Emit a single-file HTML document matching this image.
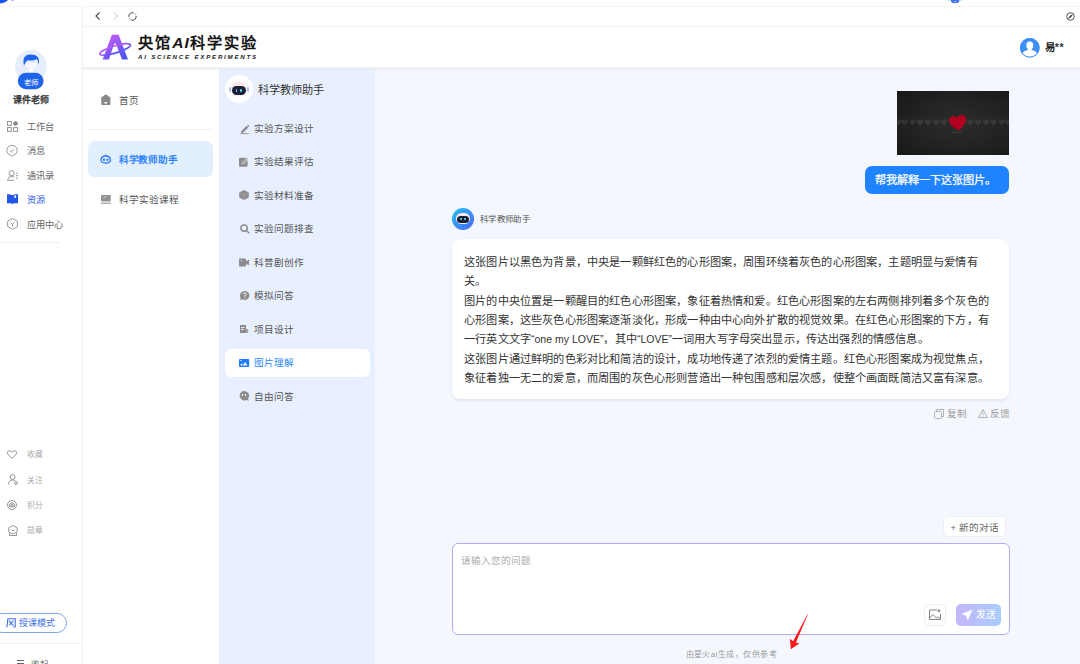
<!DOCTYPE html>
<html lang="zh-CN"><head><meta charset="utf-8">
<style>
*{box-sizing:border-box;margin:0;padding:0}
html,body{width:1080px;height:664px;overflow:hidden;background:#fff;font-family:"Liberation Sans",sans-serif;color:#333}
.a{position:absolute}
.t{position:absolute;white-space:nowrap}
svg{position:absolute;overflow:visible}
.nav{font-size:9.2px;line-height:14px;color:#666}
.bot{font-size:7.8px;line-height:12px;color:#aaa}
.m3{font-size:9.6px;line-height:14px;color:#555}
.en{letter-spacing:0;font-size:10.5px}
.m2{font-size:9.6px;line-height:14px;color:#555}
</style></head><body>
<!-- top strip -->
<div class="a" style="left:0;top:6px;width:1080px;height:1px;background:#f5f5f5"></div>
<svg style="left:0;top:0" width="16" height="5" viewBox="0 0 16 5"><path d="M0 0 H8 Q6 2.6 0 3.4Z" fill="#1a56e8"/><ellipse cx="12.5" cy="0" rx="1.2" ry="0.9" fill="#7a9cf2"/></svg>
<svg style="left:946px;top:0" width="18" height="5" viewBox="0 0 18 5"><ellipse cx="3.4" cy="0" rx="1.6" ry="1.2" fill="#b9dcfa"/><ellipse cx="15" cy="0" rx="1.6" ry="1.2" fill="#bfe6fa"/><path d="M5 0 H13.3 V1 Q13.3 3.1 11 3.1 H7.3 Q5 3.1 5 1Z" fill="#3d73ef"/><rect x="7.8" y="1" width="2.6" height="0.9" fill="#a9c2f6"/></svg>

<!-- ===== left sidebar ===== -->
<div class="a" style="left:82px;top:7px;width:1px;height:657px;background:#f0f0f0"></div>
<!-- avatar -->
<svg style="left:15px;top:49.6px" width="32" height="40" viewBox="0 0 32 40">
  <circle cx="16" cy="16" r="16" fill="#e6edfb"/>
  <path d="M9 12 Q9 20.2 16 20.4 Q23 20.2 23.2 12 Z" fill="#f4f7fe" stroke="#c9d6f3" stroke-width="0.5"/>
  <rect x="13.9" y="19" width="3.9" height="4.5" fill="#fff"/>
  <path d="M8.6 14.5 Q7 4.6 15.5 4.6 Q24.6 4.4 24 12.5 L23.4 14 Q23.2 10.4 21.8 9 Q18.5 11.2 13 10.3 Q10.5 11.2 9.6 14.8 Z" fill="#1e63e9"/>
  <rect x="2.8" y="22.7" width="25.8" height="16.6" rx="8.3" fill="#1e63e9"/>
</svg>
<div class="t" style="left:18px;top:78.3px;width:26px;text-align:center;font-size:7.4px;line-height:10px;color:#fff">老师</div>
<div class="t" style="left:6.2px;top:92.6px;width:50px;text-align:center;font-size:9px;line-height:14px;color:#2a2a2a;-webkit-text-stroke:0.35px #2a2a2a">课件老师</div>

<!-- nav items -->
<svg style="left:7px;top:121px" width="11" height="11" viewBox="0 0 11 11" fill="none" stroke="#8a8a8a" stroke-width="0.9">
  <rect x="0.5" y="0.5" width="3.8" height="3.8"/><rect x="0.5" y="6.6" width="3.8" height="3.8"/><rect x="6.6" y="6.6" width="3.8" height="3.8"/><circle cx="8.5" cy="2.5" r="1.9" fill="#8a8a8a"/>
</svg>
<div class="t nav" style="left:27.3px;top:120.3px">工作台</div>
<svg style="left:6.4px;top:144.5px" width="12" height="12" viewBox="0 0 12 12" fill="none" stroke="#8a8a8a" stroke-width="0.9">
  <path d="M4.6 10.2 A5.3 5 0 1 1 7.4 10.2 L6 11.4 Z"/><path d="M3.8 5.6 L5.4 7.1 L8.3 4.3"/>
</svg>
<div class="t nav" style="left:27.3px;top:144.3px">消息</div>
<svg style="left:7px;top:169.5px" width="12" height="11" viewBox="0 0 12 11" fill="none" stroke="#8a8a8a" stroke-width="0.9">
  <circle cx="4.6" cy="3.2" r="2.6"/><path d="M0.5 10.3 Q0.8 6.4 4.6 6.4 Q6.4 6.4 7.4 7.3 M0.5 10.3 H7"/><path d="M9.2 3.2 H11 M9.2 5.6 H11 M9.2 8 H11"/>
</svg>
<div class="t nav" style="left:27.3px;top:169px">通讯录</div>
<svg style="left:6.9px;top:193.5px" width="11" height="11" viewBox="0 0 11 11">
  <path d="M0 0.3 Q2.8 -0.2 5.5 1.2 Q8.2 -0.2 11 0.3 V9.3 H6.5 L5.5 10.6 L4.5 9.3 H0Z" fill="#2356e8"/><rect x="7.3" y="1.4" width="1.8" height="2.4" fill="#fff"/>
</svg>
<div class="t nav" style="left:27.3px;top:193.2px;color:#3c63e6">资源</div>
<svg style="left:6.9px;top:217.5px" width="11" height="12" viewBox="0 0 11 12" fill="none" stroke="#8a8a8a" stroke-width="0.9">
  <path d="M5.5 0.5 L10.3 3.2 V8.6 L5.5 11.3 L0.7 8.6 V3.2Z"/><path d="M3.6 4.6 L5.5 6.4 L7.4 4.6 M5.5 6.4 V8.4"/>
</svg>
<div class="t nav" style="left:27.3px;top:217.8px">应用中心</div>
<div class="a" style="left:0;top:242px;width:60px;height:1px;background:#f0f0f0"></div>

<!-- bottom items -->
<svg style="left:7.3px;top:449.6px" width="10" height="9" viewBox="0 0 10 9" fill="none" stroke="#8f8f8f" stroke-width="0.9"><path d="M5 8.4 L1.1 4.6 Q-0.3 2.8 1 1.2 Q2.8 -0.2 5 2 Q7.2 -0.2 9 1.2 Q10.3 2.8 8.9 4.6 Z"/></svg>
<div class="t bot" style="left:27px;top:448.8px">收藏</div>
<svg style="left:7.5px;top:474px" width="10" height="11" viewBox="0 0 10 11" fill="none" stroke="#888" stroke-width="0.9">
  <circle cx="4.5" cy="3" r="2.5"/><path d="M0.5 10.5 Q0.8 6.2 4.5 6 Q6.5 6 7.5 7"/><circle cx="8" cy="9" r="1.4"/>
</svg>
<div class="t bot" style="left:27px;top:474.6px">关注</div>
<svg style="left:7px;top:500px" width="10" height="10" viewBox="0 0 10 10" fill="none" stroke="#888" stroke-width="0.9">
  <circle cx="5" cy="5" r="4.5"/><path d="M2.5 6.8 V4.3 L5 2.6 L7.5 4.3 V6.8Z"/><circle cx="5" cy="5.2" r="1"/>
</svg>
<div class="t bot" style="left:27px;top:499.8px">积分</div>
<svg style="left:7.5px;top:525px" width="10" height="11" viewBox="0 0 10 11" fill="none" stroke="#888" stroke-width="0.9">
  <path d="M5 0.5 L9.2 2.8 V7 L5 9 L0.8 7 V2.8Z"/><path d="M1.5 8 V10.5 H8.5 V8"/><path d="M3.5 4.5 L5 6 L6.5 4.5"/>
</svg>
<div class="t bot" style="left:27px;top:525.2px">勋章</div>

<!-- 授课模式 -->
<div class="a" style="left:-8px;top:612.8px;width:74.6px;height:20.5px;border:1px solid #80a5f4;border-radius:11px"></div>
<svg style="left:6px;top:617.8px" width="10" height="10" viewBox="0 0 10 10" fill="none" stroke="#3d6fe8" stroke-width="1.1">
  <path d="M0.8 9.4 Q1.6 5 1.8 0.7 H9.2 V8.4 Q9.1 9.5 7.6 9.2"/><path d="M2.8 2.6 L7.6 8 M7.4 2.6 L3.4 7.2"/>
</svg>
<div class="t" style="left:19px;top:616.5px;font-size:9px;line-height:13px;color:#3d6fe8">授课模式</div>
<div class="a" style="left:0;top:643px;width:82px;height:1px;background:#f0f0f0"></div>
<div class="a" style="left:17px;top:660px;width:6.5px;height:1px;background:#666"></div>
<div class="a" style="left:17px;top:662.5px;width:6.5px;height:1px;background:#666"></div>
<div class="t" style="left:31px;top:657.5px;font-size:8.5px;line-height:12px;color:#666">收起</div>

<!-- ===== nav bar ===== -->
<div class="a" style="left:83px;top:26px;width:997px;height:1px;background:#f0f0f0"></div>
<svg style="left:95px;top:12px" width="6" height="8" viewBox="0 0 6 8" fill="none" stroke="#444" stroke-width="1.1"><path d="M4.5 0.5 L1 4 L4.5 7.5"/></svg>
<svg style="left:113px;top:12px" width="6" height="8" viewBox="0 0 6 8" fill="none" stroke="#ccc" stroke-width="1"><path d="M1 0.5 L4.5 4 L1 7.5"/></svg>
<svg style="left:127.5px;top:11.8px" width="9" height="9" viewBox="0 0 9 9" fill="none" stroke="#444" stroke-width="1"><path d="M5.6 0.9 A3.7 3.7 0 0 0 0.8 4.9"/><path d="M3.2 8.1 A3.7 3.7 0 0 0 8.1 4"/><path d="M1.2 6.3 A3.7 3.7 0 0 0 2 7.4 M7.1 1.6 A3.7 3.7 0 0 1 7.9 2.6"/></svg>
<svg style="left:1065.5px;top:12px" width="9" height="9" viewBox="0 0 9 9" fill="none" stroke="#444" stroke-width="0.9"><circle cx="4.5" cy="4.5" r="3.8"/><path d="M6.2 2.8 L3.6 4.6 L2.8 6.2 L5.4 4.4Z" fill="#444"/></svg>

<!-- ===== header ===== -->
<svg style="left:96px;top:30px" width="40" height="32" viewBox="0 0 40 32">
  <defs><linearGradient id="lg" x1="0.2" y1="0" x2="0.8" y2="1"><stop offset="0" stop-color="#c95af6"/><stop offset="1" stop-color="#4b56f6"/></linearGradient></defs>
  <path d="M15.9 4.8 L22.65 4.8 L32 29.6 L26 29.6 L19.9 13.6 L18.2 13.6 L13 29.6 L6.7 29.6 Z" fill="url(#lg)"/>
  <ellipse cx="19.15" cy="19.4" rx="16" ry="3.6" transform="rotate(-17 19.15 19.4)" fill="none" stroke="url(#lg)" stroke-width="1.7"/>
</svg>
<div class="t" style="left:138.3px;top:34px;font-size:15.2px;line-height:18px;font-weight:bold;color:#151515;letter-spacing:1.9px">央馆</div>
<div class="t" style="left:172.2px;top:34px;font-size:15.5px;line-height:18px;font-weight:bold;font-style:italic;color:#151515;letter-spacing:1.2px">AI</div>
<div class="t" style="left:190.3px;top:34px;font-size:15.2px;line-height:18px;font-weight:bold;color:#151515;letter-spacing:1.9px">科学实验</div>
<div class="t" style="left:138px;top:52.8px;font-size:6.2px;line-height:8px;font-weight:bold;font-style:italic;color:#222;letter-spacing:1.75px">AI SCIENCE EXPERIMENTS</div>
<div class="a" style="left:83px;top:67px;width:997px;height:2px;background:linear-gradient(#f3f3f3,#ececec)"></div><div class="a" style="left:83px;top:69px;width:997px;height:1px;background:rgba(0,0,30,0.03);z-index:5"></div>

<svg style="left:1019.5px;top:37.8px" width="19.6" height="19.6" viewBox="0 0 19.6 19.6">
  <circle cx="9.8" cy="9.8" r="9.8" fill="#3d8ff8"/>
  <path d="M9.8 3.6 Q13.2 3.6 13.3 7.2 Q13.3 10 11.6 11.2 V11.9 Q15.4 12.3 17.6 15.6 A9.8 9.8 0 0 1 2 15.6 Q4.2 12.3 8 11.9 V11.2 Q6.3 10 6.3 7.2 Q6.4 3.6 9.8 3.6Z" fill="#fff"/>
  <circle cx="9.8" cy="9.8" r="9.3" fill="none" stroke="#3d8ff8" stroke-width="1"/>
</svg>
<div class="t" style="left:1044.5px;top:41px;font-size:10.4px;line-height:13px;color:#222;font-weight:bold">易<span style="font-weight:bold;color:#333;font-size:10.5px;letter-spacing:0.6px;position:relative;top:-0.5px;left:0.3px">**</span></div>

<!-- ===== col 2 ===== -->
<svg style="left:101.3px;top:94.3px" width="9.6" height="11" viewBox="0 0 9.6 11"><path d="M4.8 0.2 L9.4 3.6 V10.2 Q9.4 10.9 8.7 10.9 H0.9 Q0.2 10.9 0.2 10.2 V3.6Z" fill="#8a8a8a"/><rect x="3.6" y="8" width="2.4" height="1.6" fill="#fff"/></svg>
<div class="t m2" style="left:118.5px;top:93.5px">首页</div>
<div class="a" style="left:88px;top:129px;width:125px;height:1px;background:#f1f1f1"></div>
<div class="a" style="left:88px;top:141px;width:125px;height:35.5px;border-radius:7px;background:#e2efff"></div>
<svg style="left:100.3px;top:154px" width="11.5" height="10" viewBox="0 0 11.5 10" fill="none" stroke="#2f7cf6" stroke-width="1.3"><path d="M1 6.2 Q1 2 5.75 2 Q10.5 2 10.5 6.2 Q10.5 9 5.75 9 Q1 9 1 6.2Z"/><path d="M5.75 2 V0.6"/><circle cx="4" cy="5.8" r="0.55" fill="#2f7cf6"/><circle cx="7.5" cy="5.8" r="0.55" fill="#2f7cf6"/></svg>
<div class="t m2" style="left:118.8px;top:152.8px;color:#2f86fb;font-weight:bold;letter-spacing:-0.2px">科学教师助手</div>
<svg style="left:101.2px;top:195.2px" width="9.8" height="9" viewBox="0 0 9.8 9"><rect x="0" y="0" width="9.8" height="6.4" rx="0.8" fill="#939393"/><rect x="2.4" y="1.6" width="3" height="1" fill="#d0d0d0"/><rect x="0" y="7.6" width="9.8" height="1.3" fill="#a5a5a5"/></svg>
<div class="t m2" style="left:118.5px;top:192.5px">科学实验课程</div>

<!-- ===== col 3 ===== -->
<div class="a" style="left:219px;top:69px;width:155.5px;height:595px;background:#e8f0ff"></div>
<div class="a" style="left:224.8px;top:75.3px;width:27.8px;height:27.8px;border-radius:50%;background:#fff"></div>
<div class="a" style="left:229px;top:87.2px;width:2.2px;height:4.4px;border-radius:1.1px;background:#a9c1f7"></div>
<div class="a" style="left:246.5px;top:87.2px;width:2.2px;height:4.4px;border-radius:1.1px;background:#a9c1f7"></div>
<div class="a" style="left:230.6px;top:82px;width:16.6px;height:14.2px;border-radius:7px;background:linear-gradient(160deg,#fbdde8,#f3f0f8 55%,#e4ecfb)"></div>
<div class="a" style="left:232px;top:85.8px;width:14px;height:9px;border-radius:4.5px;background:#1c1f35"></div>
<div class="a" style="left:235.6px;top:88.5px;width:1.7px;height:3.4px;border-radius:0.9px;background:#52e3e8"></div>
<div class="a" style="left:240.2px;top:88.5px;width:1.7px;height:3.4px;border-radius:0.9px;background:#52e3e8"></div>
<div class="t" style="left:257.5px;top:82px;font-size:11.2px;line-height:16px;color:#333">科学教师助手</div>

<svg style="left:239.5px;top:123.5px" width="10" height="10" viewBox="0 0 10 10"><path d="M1.2 7.2 L6.6 1.8 L8.3 3.5 L2.9 8.9 H1.2Z" fill="#8c8c8c"/><path d="M7.1 1.3 L7.9 0.5 L9.6 2.2 L8.8 3Z" fill="#8c8c8c"/><rect x="0.3" y="9.2" width="8.5" height="0.9" fill="#8c8c8c"/></svg>
<div class="t m3" style="left:253.8px;top:121.5px">实验方案设计</div>
<svg style="left:239.3px;top:157px" width="10" height="10" viewBox="0 0 10 10"><rect x="0" y="0.8" width="8.6" height="9" rx="1" fill="#8c8c8c"/><path d="M2.6 7.2 L3 5.4 L7.6 0.8 L9.2 2.4 L4.6 7Z" fill="#fff"/><path d="M3.4 5.6 L7.7 1.4 L8.6 2.3 L4.4 6.5 L3.2 6.9Z" fill="#8c8c8c"/></svg>
<div class="t m3" style="left:253.8px;top:155px">实验结果评估</div>
<svg style="left:239.2px;top:190.2px" width="10" height="10" viewBox="0 0 10 10"><path d="M5 0 L9.8 2.4 V7.6 L5 10 L0.2 7.6 V2.4Z" fill="#8c8c8c"/><path d="M0.4 2.5 L5 4.8 L9.6 2.5 M5 4.8 V9.8" stroke="#b5b5b5" stroke-width="0.6" fill="none"/></svg>
<div class="t m3" style="left:253.8px;top:188.5px">实验材料准备</div>
<svg style="left:239.6px;top:224px" width="10" height="10" viewBox="0 0 10 10" fill="none" stroke="#8c8c8c" stroke-width="1.5"><circle cx="4.1" cy="4.1" r="3.2"/><path d="M6.5 6.5 L9.2 9.2"/></svg>
<div class="t m3" style="left:253.8px;top:222px">实验问题排查</div>
<svg style="left:239.2px;top:258px" width="10" height="9" viewBox="0 0 10 9"><rect x="0" y="0.5" width="7" height="8" rx="1" fill="#8c8c8c"/><path d="M7 3.2 L10 1.5 V7.5 L7 5.8Z" fill="#8c8c8c"/><circle cx="2.2" cy="2.6" r="0.9" fill="#b5b5b5"/></svg>
<div class="t m3" style="left:253.8px;top:255.5px">科普剧创作</div>
<svg style="left:240px;top:290.8px" width="10" height="10" viewBox="0 0 10 10"><path d="M4.7 0 A4.7 4.5 0 1 1 2.2 8.3 L0.2 9.3 L0.6 6.8 A4.7 4.5 0 0 1 4.7 0Z" fill="#8c8c8c"/><path d="M3.3 3.4 Q3.4 1.9 4.8 1.9 Q6.2 2 6.1 3.3 Q6 4.1 5.1 4.6 L4.9 5.8" stroke="#fff" stroke-width="0.9" fill="none"/><circle cx="4.9" cy="7.2" r="0.55" fill="#fff"/></svg>
<div class="t m3" style="left:253.8px;top:289px">模拟问答</div>
<svg style="left:240px;top:325px" width="9" height="8" viewBox="0 0 9 8"><rect x="0" y="0" width="6" height="8" fill="#8c8c8c"/><rect x="6" y="4" width="2.2" height="4" fill="#a6a6a6"/><rect x="1.2" y="2.1" width="3.3" height="0.9" fill="#fff"/><rect x="1.2" y="4.1" width="2.5" height="0.9" fill="#fff"/></svg>
<div class="t m3" style="left:253.8px;top:322.5px">项目设计</div>

<div class="a" style="left:225px;top:348.5px;width:144.5px;height:28px;border-radius:6px;background:#fff"></div>
<svg style="left:239px;top:359px" width="10.2" height="8" viewBox="0 0 10.2 8"><rect x="0" y="0" width="10.2" height="8" rx="1" fill="#1e7bff"/><path d="M1.2 6.6 L2.7 4.3 L3.9 6.2 L6 3.1 L8.6 6.6Z" fill="#fff"/><rect x="1.2" y="1.2" width="1.7" height="0.8" fill="#fff" opacity="0.8"/></svg>
<div class="t m3" style="left:253.8px;top:356px;color:#2b88fc">图片理解</div>
<svg style="left:239.2px;top:391px" width="10" height="10" viewBox="0 0 10 10"><path d="M5 0 A4.9 4.7 0 1 0 7.4 9 L9.6 9.7 L9.2 7.6 A4.9 4.7 0 0 0 5 0Z" fill="#8c8c8c"/><ellipse cx="3.4" cy="4" rx="0.65" ry="1" fill="#fff"/><ellipse cx="6.4" cy="4" rx="0.65" ry="1" fill="#fff"/></svg>
<div class="t m3" style="left:253.8px;top:389.5px">自由问答</div>

<!-- ===== main ===== -->
<div class="a" style="left:375px;top:69px;width:705px;height:595px;background:#f4f8fe"></div>

<!-- image -->
<div class="a" style="left:897px;top:91px;width:112px;height:63.5px;background:radial-gradient(ellipse at 55% 50%,#2c2c2c 0%,#242424 45%,#181818 100%);overflow:hidden">
  <svg style="left:0;top:0" width="112" height="64" viewBox="0 0 112 64">
    <path d="M0.5 1 C0.2 0.75 0 0.55 0 0.3 C0 0.08 0.16 0 0.28 0 C0.4 0 0.47 0.08 0.5 0.2 C0.53 0.08 0.6 0 0.72 0 C0.84 0 1 0.08 1 0.3 C1 0.55 0.8 0.75 0.5 1Z" transform="translate(-2.1 28.6) scale(6.4 6)" fill="#323232"/><path d="M0.5 1 C0.2 0.75 0 0.55 0 0.3 C0 0.08 0.16 0 0.28 0 C0.4 0 0.47 0.08 0.5 0.2 C0.53 0.08 0.6 0 0.72 0 C0.84 0 1 0.08 1 0.3 C1 0.55 0.8 0.75 0.5 1Z" transform="translate(4.3 28.6) scale(6.4 6)" fill="#323232"/><path d="M0.5 1 C0.2 0.75 0 0.55 0 0.3 C0 0.08 0.16 0 0.28 0 C0.4 0 0.47 0.08 0.5 0.2 C0.53 0.08 0.6 0 0.72 0 C0.84 0 1 0.08 1 0.3 C1 0.55 0.8 0.75 0.5 1Z" transform="translate(12.4 28.6) scale(6.4 6)" fill="#323232"/><path d="M0.5 1 C0.2 0.75 0 0.55 0 0.3 C0 0.08 0.16 0 0.28 0 C0.4 0 0.47 0.08 0.5 0.2 C0.53 0.08 0.6 0 0.72 0 C0.84 0 1 0.08 1 0.3 C1 0.55 0.8 0.75 0.5 1Z" transform="translate(20.1 28.6) scale(6.4 6)" fill="#383838"/><path d="M0.5 1 C0.2 0.75 0 0.55 0 0.3 C0 0.08 0.16 0 0.28 0 C0.4 0 0.47 0.08 0.5 0.2 C0.53 0.08 0.6 0 0.72 0 C0.84 0 1 0.08 1 0.3 C1 0.55 0.8 0.75 0.5 1Z" transform="translate(28.0 28.6) scale(6.4 6)" fill="#383838"/><path d="M0.5 1 C0.2 0.75 0 0.55 0 0.3 C0 0.08 0.16 0 0.28 0 C0.4 0 0.47 0.08 0.5 0.2 C0.53 0.08 0.6 0 0.72 0 C0.84 0 1 0.08 1 0.3 C1 0.55 0.8 0.75 0.5 1Z" transform="translate(36.1 28.6) scale(6.4 6)" fill="#383838"/><path d="M0.5 1 C0.2 0.75 0 0.55 0 0.3 C0 0.08 0.16 0 0.28 0 C0.4 0 0.47 0.08 0.5 0.2 C0.53 0.08 0.6 0 0.72 0 C0.84 0 1 0.08 1 0.3 C1 0.55 0.8 0.75 0.5 1Z" transform="translate(43.6 28.6) scale(6.4 6)" fill="#383838"/><path d="M0.5 1 C0.2 0.75 0 0.55 0 0.3 C0 0.08 0.16 0 0.28 0 C0.4 0 0.47 0.08 0.5 0.2 C0.53 0.08 0.6 0 0.72 0 C0.84 0 1 0.08 1 0.3 C1 0.55 0.8 0.75 0.5 1Z" transform="translate(69.7 28.6) scale(6.4 6)" fill="#383838"/><path d="M0.5 1 C0.2 0.75 0 0.55 0 0.3 C0 0.08 0.16 0 0.28 0 C0.4 0 0.47 0.08 0.5 0.2 C0.53 0.08 0.6 0 0.72 0 C0.84 0 1 0.08 1 0.3 C1 0.55 0.8 0.75 0.5 1Z" transform="translate(77.8 28.6) scale(6.4 6)" fill="#383838"/><path d="M0.5 1 C0.2 0.75 0 0.55 0 0.3 C0 0.08 0.16 0 0.28 0 C0.4 0 0.47 0.08 0.5 0.2 C0.53 0.08 0.6 0 0.72 0 C0.84 0 1 0.08 1 0.3 C1 0.55 0.8 0.75 0.5 1Z" transform="translate(85.9 28.6) scale(6.4 6)" fill="#383838"/><path d="M0.5 1 C0.2 0.75 0 0.55 0 0.3 C0 0.08 0.16 0 0.28 0 C0.4 0 0.47 0.08 0.5 0.2 C0.53 0.08 0.6 0 0.72 0 C0.84 0 1 0.08 1 0.3 C1 0.55 0.8 0.75 0.5 1Z" transform="translate(93.4 28.6) scale(6.4 6)" fill="#383838"/><path d="M0.5 1 C0.2 0.75 0 0.55 0 0.3 C0 0.08 0.16 0 0.28 0 C0.4 0 0.47 0.08 0.5 0.2 C0.53 0.08 0.6 0 0.72 0 C0.84 0 1 0.08 1 0.3 C1 0.55 0.8 0.75 0.5 1Z" transform="translate(101.5 28.6) scale(6.4 6)" fill="#323232"/><path d="M0.5 1 C0.2 0.75 0 0.55 0 0.3 C0 0.08 0.16 0 0.28 0 C0.4 0 0.47 0.08 0.5 0.2 C0.53 0.08 0.6 0 0.72 0 C0.84 0 1 0.08 1 0.3 C1 0.55 0.8 0.75 0.5 1Z" transform="translate(107.8 28.6) scale(6.4 6)" fill="#323232"/>
    <path d="M0.5 1 C0.2 0.75 0 0.55 0 0.3 C0 0.08 0.16 0 0.28 0 C0.4 0 0.47 0.08 0.5 0.2 C0.53 0.08 0.6 0 0.72 0 C0.84 0 1 0.08 1 0.3 C1 0.55 0.8 0.75 0.5 1Z" transform="translate(52.5 24.5) rotate(-8 8.5 7.5) scale(17 15)" fill="#b3001f"/>
    <rect x="55.5" y="40.8" width="10" height="1.1" fill="#3e3e3e"/>
  </svg>
</div>

<!-- bubble -->
<div class="a" style="left:864.5px;top:165.8px;width:144.7px;height:28.2px;border-radius:7px;background:#1f82ff"></div>
<div class="t" style="left:875.3px;top:172px;font-size:11.2px;line-height:16px;color:#fff;-webkit-text-stroke:0.25px #fff">帮我解释一下这张图片。</div>

<!-- bot row -->
<div class="a" style="left:452px;top:208px;width:22px;height:22px;border-radius:50%;background:linear-gradient(135deg,#22c1ee,#4d63f5)"></div>
<div class="a" style="left:455.8px;top:212.8px;width:14.4px;height:11.6px;border-radius:5.8px;background:linear-gradient(160deg,#fde3ec,#eef0fa)"></div>
<div class="a" style="left:457.3px;top:215.6px;width:11.4px;height:7.2px;border-radius:3.6px;background:#1b1f34"></div>
<div class="a" style="left:460.2px;top:217.6px;width:1.5px;height:2.8px;border-radius:0.8px;background:#4fe0ea"></div>
<div class="a" style="left:464.3px;top:217.6px;width:1.5px;height:2.8px;border-radius:0.8px;background:#4fe0ea"></div>
<div class="t" style="left:480px;top:213px;font-size:8.4px;line-height:12px;color:#555;letter-spacing:0.35px">科学教师助手</div>

<!-- answer card -->
<div class="a" style="left:452px;top:238.5px;width:557px;height:160px;border-radius:8px;background:#fff;box-shadow:0 1.5px 3px rgba(30,50,110,0.09)"></div>
<div class="a" id="ans" style="left:464px;top:252.6px;font-size:11.2px;line-height:19.45px;letter-spacing:0.17px;color:#333;white-space:nowrap;text-spacing-trim:space-all"><div>这张图片以黑色为背景，中央是一颗鲜红色的心形图案，周围环绕着灰色的心形图案，主题明显与爱情有</div><div>关。</div><div>图片的中央位置是一颗醒目的红色心形图案，象征着热情和爱。红色心形图案的左右两侧排列着多个灰色的</div><div>心形图案，这些灰色心形图案逐渐淡化，形成一种由中心向外扩散的视觉效果。在红色心形图案的下方，有</div><div>一行英文文字<span class="en">“one my LOVE”</span>，其中<span class="en">“LOVE”</span>一词用大写字母突出显示，传达出强烈的情感信息。</div><div>这张图片通过鲜明的色彩对比和简洁的设计，成功地传递了浓烈的爱情主题。红色心形图案成为视觉焦点，</div><div>象征着独一无二的爱意，而周围的灰色心形则营造出一种包围感和层次感，使整个画面既简洁又富有深意。</div></div>

<!-- copy / feedback -->
<svg style="left:934px;top:409px" width="10" height="10" viewBox="0 0 10 10" fill="none" stroke="#aaa" stroke-width="0.9"><rect x="0.5" y="2.5" width="7" height="7" rx="1"/><path d="M2.5 2.5 V0.5 H9.5 V7.5 H7.5"/></svg>
<div class="t" style="left:946.5px;top:407px;font-size:9.6px;line-height:14px;color:#999">复制</div>
<svg style="left:977.5px;top:409px" width="10" height="9" viewBox="0 0 10 9" fill="none" stroke="#aaa" stroke-width="0.9"><path d="M5 0.6 L9.5 8.5 H0.5Z"/><path d="M5 3.3 V6 M5 6.8 V7.6"/></svg>
<div class="t" style="left:990px;top:407px;font-size:9.6px;line-height:14px;color:#999">反馈</div>

<!-- new conversation -->
<div class="a" style="left:943.3px;top:516.3px;width:63px;height:21px;border-radius:5px;background:#fff;border:1px solid #eceef3"></div>
<div class="t" style="left:950.5px;top:520.5px;font-size:9.6px;line-height:14px;color:#666">+ 新的对话</div>

<!-- input -->
<div class="a" style="left:452px;top:543px;width:558px;height:92px;border-radius:6px;background:#fff;border:1px solid #b7aafd"></div>
<div class="t" style="left:461px;top:553.5px;font-size:9.6px;line-height:14px;color:#adadad">请输入您的问题</div>
<div class="a" style="left:924px;top:603.6px;width:21.5px;height:22.3px;border-radius:5px;background:#fff;border:1px solid #eee"></div>
<svg style="left:928.5px;top:609px" width="13" height="11" viewBox="0 0 13 11" fill="none" stroke="#777" stroke-width="0.9"><path d="M8 1 H0.5 V10.5 H11.5 V5"/><path d="M0.5 9 L4 5.5 L7.5 9 L9 7.8 L11.5 10"/><path d="M10 0 V3.5 M8.3 1.8 H11.7"/></svg>
<div class="a" style="left:955.6px;top:603.6px;width:45px;height:22.3px;border-radius:5px;background:linear-gradient(90deg,#c3b6fb,#a9cdfd)"></div>
<svg style="left:961px;top:609px" width="12" height="12" viewBox="0 0 12 12"><path d="M11.5 0.5 L0.5 5 L5 6.8 L6.8 11.5Z" fill="#fff"/></svg>
<div class="t" style="left:975.5px;top:608.3px;font-size:9.8px;line-height:14px;color:#fff">发送</div>

<div class="t" style="left:685.5px;top:648.5px;font-size:8px;line-height:12px;color:#999;letter-spacing:0.45px">由星火ai生成，仅供参考</div>

<!-- red arrow -->
<svg style="left:780px;top:605px" width="40" height="50" viewBox="0 0 40 50"><path d="M27.8 9.7 L15.9 37.6 L19.3 38.5 L10.9 44.2 L9.8 33.8 L13.1 36.3 L27.4 9.5Z" fill="#ff1a1a"/></svg>

</body></html>
